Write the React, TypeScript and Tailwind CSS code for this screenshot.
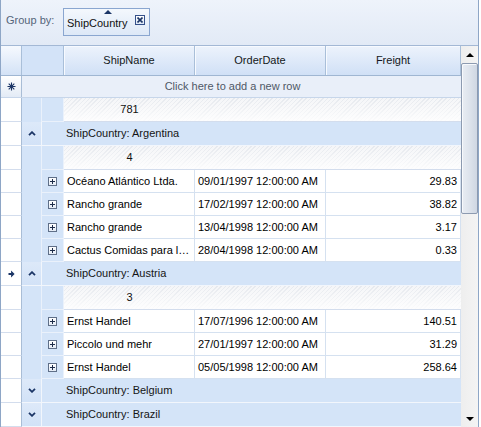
import { ReactNode } from "react"

const hatch =
  "bg-[image:linear-gradient(to_bottom,rgba(255,255,255,0)_0%,rgba(255,255,255,0.85)_100%),repeating-linear-gradient(135deg,#e6e9ee_0px,#e6e9ee_1px,#f5f6f8_1px,#f5f6f8_3px)]"

type Row =
  | { kind: "summary"; value: string; h: number }
  | { kind: "group"; label: string; open: boolean; current?: boolean }
  | { kind: "data"; name: string; date: string; freight: string }

const rows: Row[] = [
  { kind: "summary", value: "781", h: 24 },
  { kind: "group", label: "ShipCountry: Argentina", open: true },
  { kind: "summary", value: "4", h: 24 },
  { kind: "data", name: "Océano Atlántico Ltda.", date: "09/01/1997 12:00:00 AM", freight: "29.83" },
  { kind: "data", name: "Rancho grande", date: "17/02/1997 12:00:00 AM", freight: "38.82" },
  { kind: "data", name: "Rancho grande", date: "13/04/1998 12:00:00 AM", freight: "3.17" },
  { kind: "data", name: "Cactus Comidas para llevar", date: "28/04/1998 12:00:00 AM", freight: "0.33" },
  { kind: "group", label: "ShipCountry: Austria", open: true, current: true },
  { kind: "summary", value: "3", h: 24 },
  { kind: "data", name: "Ernst Handel", date: "17/07/1996 12:00:00 AM", freight: "140.51" },
  { kind: "data", name: "Piccolo und mehr", date: "27/01/1997 12:00:00 AM", freight: "31.29" },
  { kind: "data", name: "Ernst Handel", date: "05/05/1998 12:00:00 AM", freight: "258.64" },
  { kind: "group", label: "ShipCountry: Belgium", open: false },
  { kind: "group", label: "ShipCountry: Brazil", open: false },
]

function Chevron({ up }: { up: boolean }) {
  return (
    <svg width="8" height="5" viewBox="0 0 8 5">
      <path
        d={up ? "M1 4.2 L4 1.2 L7 4.2" : "M1 0.8 L4 3.8 L7 0.8"}
        fill="none"
        stroke="#1b3566"
        strokeWidth="1.8"
      />
    </svg>
  )
}

function ExpandBox() {
  return (
    <div className="flex h-[9px] w-[9px] items-center justify-center border border-[#5f6f88] bg-gradient-to-b from-white to-[#e4ebf5]">
      <svg width="5" height="5" viewBox="0 0 5 5">
        <path d="M0 2.5h5M2.5 0v5" stroke="#1c2b48" strokeWidth="1" />
      </svg>
    </div>
  )
}

function Indicator({ children, h }: { children?: ReactNode; h: number }) {
  return (
    <div
      className="flex w-[21px] shrink-0 items-center justify-center border-r border-b border-r-[#a9bdd6] border-b-[#d3dded] bg-white"
      style={{ height: h }}
    >
      {children}
    </div>
  )
}

function GridRow({ row }: { row: Row }) {
  if (row.kind === "summary") {
    return (
      <div className="flex" style={{ height: row.h }}>
        <Indicator h={row.h} />
        <div className="w-[20px] shrink-0 border-r border-[#eaf1fb] bg-[#d4e4f8]" />
        <div className="w-[22px] shrink-0 border-r border-b border-[#eaf1fb] bg-[#d4e4f8]" />
        <div className={`flex flex-1 border-b border-[#d3dded] ${hatch}`}>
          <div className="flex w-[131px] items-center justify-center text-[#111]">{row.value}</div>
        </div>
      </div>
    )
  }
  if (row.kind === "group") {
    return (
      <div className="flex h-[24px]">
        <Indicator h={24}>
          {row.current && (
            <svg width="7" height="8" viewBox="0 0 7 8">
              <path d="M0.5 3h2.6V0.6L6.6 4 3.1 7.4V5H0.5z" fill="#1b3566" />
            </svg>
          )}
        </Indicator>
        <div className="flex w-[20px] shrink-0 items-center justify-center border-r border-b border-[#f2f6fc] bg-gradient-to-b from-[#dde9f9] to-[#d2e2f7]">
          <Chevron up={row.open} />
        </div>
        <div className="flex flex-1 items-center border-b border-[#f2f6fc] bg-[#d4e4f8] pl-[24px] text-[#151515]">
          {row.label}
        </div>
      </div>
    )
  }
  return (
    <div className="flex h-[23px]">
      <Indicator h={23} />
      <div className="w-[20px] shrink-0 border-r border-[#eaf1fb] bg-[#d4e4f8]" />
      <div className="flex w-[22px] shrink-0 items-center justify-center border-r border-b border-[#eaf1fb] bg-[#d4e4f8]">
        <ExpandBox />
      </div>
      <div className="flex w-[131px] shrink-0 items-center overflow-hidden border-r border-b border-[#d5e1f0] bg-white px-[3px] text-black">
        <span className="truncate">{row.name}</span>
      </div>
      <div className="flex w-[131px] shrink-0 items-center border-r border-b border-[#d5e1f0] bg-white px-[3px] text-black">
        {row.date}
      </div>
      <div className="flex w-[135px] shrink-0 items-center justify-end border-r border-b border-[#d5e1f0] bg-white px-[3px] text-black">
        {row.freight}
      </div>
    </div>
  )
}

function HeaderCell({ label, w }: { label: string; w: string }) {
  return (
    <div
      className={`flex ${w} shrink-0 items-center justify-center border-r border-[#a9bfd9] bg-gradient-to-b from-[#edf3fc] to-[#d0e0f6] text-[#141820] shadow-[inset_1px_1px_0_#f7faff]`}
    >
      {label}
    </div>
  )
}

export default function App() {
  return (
    <div className="h-[427px] w-[481px] overflow-hidden bg-white font-['Liberation_Sans',Arial,sans-serif] text-[11px] leading-[13px]">
      <div className="h-[427px] w-[479px] border-x border-[#8ea6c6]">
        {/* group by panel */}
        <div className="flex h-[46px] items-start border-b border-[#a3b8d5] bg-gradient-to-b from-[#eef3fb] to-[#e2eaf6] pt-[8px] pl-[5px]">
          <div className="mt-[6px] w-[57px] text-[#55657a]">Group by:</div>
          <div className="relative h-[28px] w-[87px] border border-[#8aa6d0] bg-gradient-to-b from-[#f4f8fd] to-[#dde8f7] pt-[8px] pl-[3px] text-[#101010]">
            ShipCountry
            <div className="absolute top-[1px] left-[40px] h-0 w-0 border-x-[4px] border-b-[4px] border-x-transparent border-b-[#1b3566]" />
            <div className="absolute top-[6px] left-[71px] flex h-[10px] w-[10px] items-center justify-center border border-[#34508a] bg-gradient-to-b from-white to-[#dbe6f5]">
              <svg width="6" height="6" viewBox="0 0 6 6">
                <path d="M0.5 0.5L5.5 5.5M5.5 0.5L0.5 5.5" stroke="#1b3566" strokeWidth="1.6" />
              </svg>
            </div>
          </div>
        </div>

        <div className="flex">
          {/* grid body */}
          <div className="w-[460px] shrink-0">
            <div className="flex h-[30px] border-b border-[#9fb6d2]">
              <div className="w-[21px] shrink-0 border-r border-[#a9bfd9] bg-gradient-to-b from-[#f6f9fe] to-[#d3e2f6]" />
              <div className="w-[42px] shrink-0 border-r border-[#a9bfd9] bg-[#d3e3f8]" />
              <HeaderCell label="ShipName" w="w-[131px]" />
              <HeaderCell label="OrderDate" w="w-[131px]" />
              <HeaderCell label="Freight" w="w-[135px]" />
            </div>
            <div className="flex h-[22px] border-b border-[#c7d6ea]">
              <div className="flex w-[21px] shrink-0 items-center justify-center border-r border-[#a9bdd6] bg-gradient-to-b from-white to-[#e3ebf6]">
                <svg width="9" height="9" viewBox="0 0 9 9">
                  <path d="M4.5 0.5v8M0.5 4.5h8M1.7 1.7l5.6 5.6M7.3 1.7l-5.6 5.6" stroke="#1b3566" strokeWidth="1.1" />
                </svg>
              </div>
              <div className="flex flex-1 items-center justify-center bg-[#e9eff9] pr-[18px] text-[#4f5866]">
                Click here to add a new row
              </div>
            </div>
            {rows.map((r, i) => (
              <GridRow key={i} row={r} />
            ))}
          </div>

          {/* scrollbar */}
          <div className="flex h-[381px] w-[17px] shrink-0 flex-col bg-gradient-to-r from-[#eeeeee] to-[#f4f4f4]">
            <div className="flex h-[17px] shrink-0 items-center justify-center">
              <div className="h-0 w-0 border-x-[4px] border-b-[4px] border-x-transparent border-b-black" />
            </div>
            <div className="h-[151px] shrink-0 rounded-[2px] border border-[#8c9ab0] bg-gradient-to-r from-[#e9edf3] via-[#dde3ec] to-[#cfd7e3] shadow-[inset_1px_1px_0_#f7f9fc]" />
            <div className="flex-1" />
            <div className="flex h-[17px] shrink-0 items-center justify-center">
              <div className="h-0 w-0 border-x-[4px] border-t-[4px] border-x-transparent border-t-black" />
            </div>
          </div>
        </div>
      </div>
    </div>
  )
}
